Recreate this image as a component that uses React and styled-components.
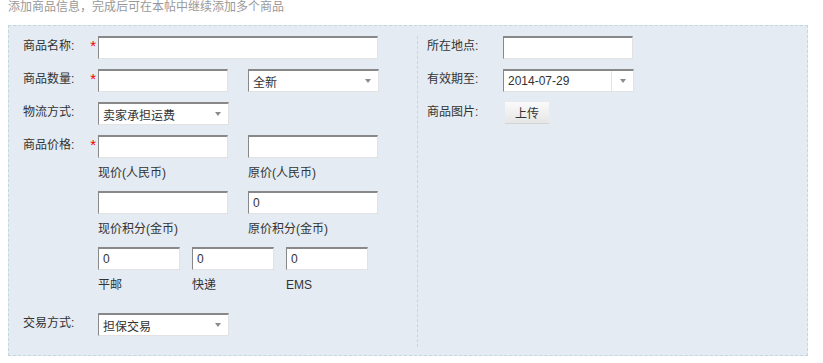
import React from 'react';
import styled, { createGlobalStyle } from 'styled-components';

const GlobalStyle = createGlobalStyle`
  body {
    margin: 0;
    background: #fff;
    font-family: "Liberation Sans", "Noto Sans CJK SC", sans-serif;
    font-size: 12px;
    color: #333;
  }
`

const Page = styled.div`
  width: 823px;
  height: 363px;
  overflow: hidden;
`

const Intro = styled.div`
  height: 14px;
  line-height: 14px;
  padding-left: 8px;
  color: #999;
  margin-bottom: 11px;
`

const Panel = styled.div`
  margin-left: 8px;
  width: 798px;
  display: flex;
  background: #e4ebf2;
  border: 1px dashed #c2d7df;
`

const Column = styled.div`
  width: 394px;
  display: flex;
  flex-direction: column;
  gap: 10px;
  padding: 10px 0 19px 14px;
`

const SideColumn = styled.div`
  width: 380px;
  display: flex;
  flex-direction: column;
  gap: 10px;
  margin: 10px 0 8px;
  padding-left: 9px;
  border-left: 1px dashed #c2d7df;
`

const Row = styled.div`
  display: flex;
  align-items: flex-start;
`

const Label = styled.div`
  width: ${p => p.$w || 75}px;
  flex: none;
  height: 23px;
  line-height: 21px;
  display: flex;
  color: #333;
`

const Star = styled.span`
  color: #e00;
  margin-left: auto;
  margin-right: 2px;
  font-size: 15px;
  line-height: 19px;
`

const Input = styled.input`
  box-sizing: border-box;
  width: ${p => p.$w || 130}px;
  height: 23px;
  margin: 0;
  padding: 0 4px;
  background: #fff;
  border: 1px solid;
  border-top-width: 2px;
  border-color: #888 #e2e2e2 #e2e2e2 #888;
  font: inherit;
  font-size: 12px;
  color: #333;
  outline: none;
`

const Select = styled.div`
  box-sizing: border-box;
  position: relative;
  width: 131px;
  height: 23px;
  background: #fff;
  border: 1px solid;
  border-top-width: 2px;
  border-color: #888 #e2e2e2 #e2e2e2 #888;
  display: flex;
  align-items: center;
  padding-left: 4px;
  color: #333;
`

const Arrow = styled.span`
  position: absolute;
  right: ${p => p.$boxed ? 0 : 7}px;
  top: 0;
  bottom: 0;
  width: ${p => p.$boxed ? 21 : 7}px;
  border-left: ${p => p.$boxed ? '1px solid #e2e2e2' : 'none'};
  display: flex;
  align-items: center;
  justify-content: center;

  &::after {
    content: "";
    border-left: 3.5px solid transparent;
    border-right: 3.5px solid transparent;
    border-top: 4px solid #8c8c8c;
  }
`

const Fields = styled.div`
  display: flex;
  flex-direction: column;
`

const Pair = styled.div`
  display: flex;
  gap: ${p => p.$gap || 20}px;
`

const Field = styled.div`
  width: ${p => p.$w || 130}px;
`

const Caption = styled.div`
  height: 33px;
  box-sizing: border-box;
  padding-top: 8px;
  line-height: 14px;
  color: #333;
`

const Button = styled.button`
  margin-left: 2px;
  width: 44px;
  height: 22px;
  padding: 0;
  border: none;
  border-bottom: 1px solid #d4d4d4;
  background: linear-gradient(#fafafa, #e6e6e6);
  font: inherit;
  font-size: 12px;
  color: #333;
  cursor: pointer;
`

const Required = ({ children }) => (
  <Label>{children}<Star>*</Star></Label>
)

export default function App() {
  return (
    <Page>
      <GlobalStyle />
      <Intro>添加商品信息，完成后可在本帖中继续添加多个商品</Intro>
      <Panel>
        <Column>
          <Row>
            <Required>商品名称:</Required>
            <Input $w={280} />
          </Row>
          <Row>
            <Required>商品数量:</Required>
            <Pair>
              <Input />
              <Select>全新<Arrow /></Select>
            </Pair>
          </Row>
          <Row>
            <Label>物流方式:</Label>
            <Select>卖家承担运费<Arrow /></Select>
          </Row>
          <Row>
            <Required>商品价格:</Required>
            <Fields>
              <Pair>
                <Field><Input /><Caption>现价(人民币)</Caption></Field>
                <Field><Input /><Caption>原价(人民币)</Caption></Field>
              </Pair>
              <Pair>
                <Field><Input /><Caption>现价积分(金币)</Caption></Field>
                <Field><Input defaultValue="0" /><Caption>原价积分(金币)</Caption></Field>
              </Pair>
              <Pair $gap={12}>
                <Field $w={82}><Input $w={82} defaultValue="0" /><Caption>平邮</Caption></Field>
                <Field $w={82}><Input $w={82} defaultValue="0" /><Caption>快递</Caption></Field>
                <Field $w={82}><Input $w={82} defaultValue="0" /><Caption>EMS</Caption></Field>
              </Pair>
            </Fields>
          </Row>
          <Row>
            <Label>交易方式:</Label>
            <Select>担保交易<Arrow /></Select>
          </Row>
        </Column>
        <SideColumn>
          <Row>
            <Label $w={76}>所在地点:</Label>
            <Input />
          </Row>
          <Row>
            <Label $w={76}>有效期至:</Label>
            <Select>2014-07-29<Arrow $boxed /></Select>
          </Row>
          <Row>
            <Label $w={76}>商品图片:</Label>
            <Button>上传</Button>
          </Row>
        </SideColumn>
      </Panel>
    </Page>
  );
}
